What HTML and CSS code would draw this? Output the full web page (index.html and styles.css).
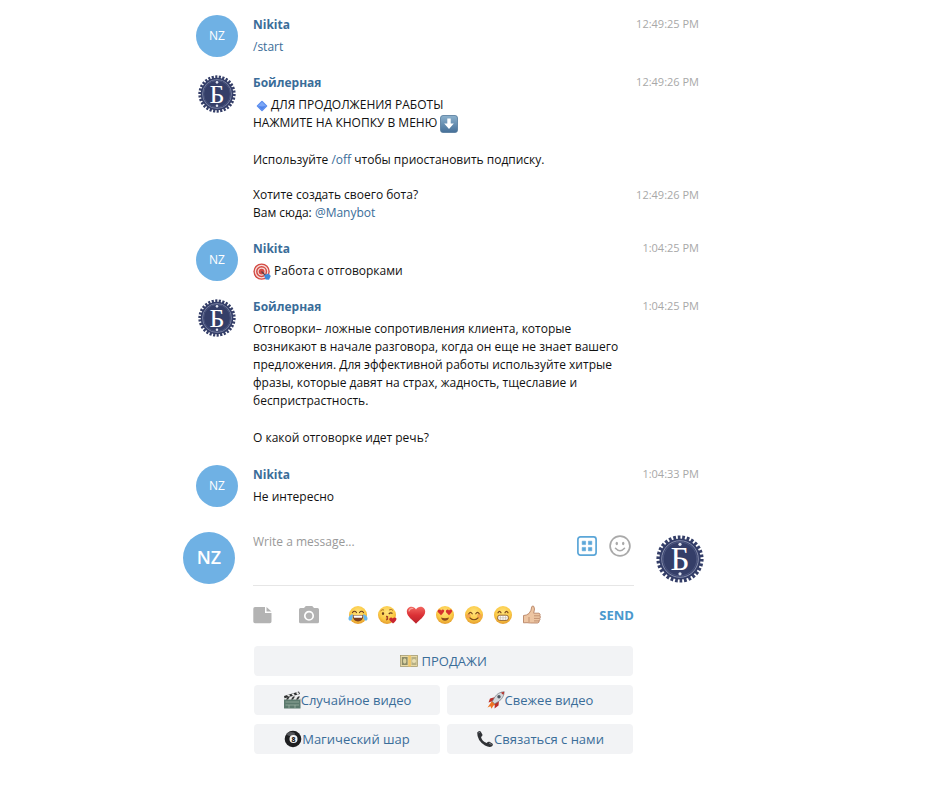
FILE: index.html
```html
<!DOCTYPE html>
<html lang="ru">
<head>
    <meta charset="UTF-8">
    <meta name="viewport" content="width=device-width, initial-scale=1.0">
    <title>Бойлерная</title>
    <link rel="stylesheet" href="styles.css">
</head>
<body>
    <!-- Shared icons -->
    <svg class="sprite" aria-hidden="true">
        <defs>
            <radialGradient id="face" cx="50%" cy="35%" r="65%">
                <stop offset="0" stop-color="#ffe37c"/>
                <stop offset="0.65" stop-color="#fbc944"/>
                <stop offset="1" stop-color="#e39a2d"/>
            </radialGradient>
            <linearGradient id="heart" x1="0" y1="0" x2="0" y2="1">
                <stop offset="0" stop-color="#f2665f"/>
                <stop offset="0.5" stop-color="#db3035"/>
                <stop offset="1" stop-color="#b8222b"/>
            </linearGradient>
            <linearGradient id="blue-key" x1="0" y1="0" x2="0" y2="1">
                <stop offset="0" stop-color="#8db2cd"/>
                <stop offset="1" stop-color="#456f98"/>
            </linearGradient>
        </defs>
        <symbol id="seal" viewBox="0 0 48 48">
            <circle cx="24" cy="24" r="21.4" fill="none" stroke="#343e68" stroke-width="4.4" pathLength="60" stroke-dasharray="1.2 0.8"/>
            <circle cx="24" cy="24" r="20.6" fill="#343e68"/>
            <circle cx="24" cy="24" r="18.3" fill="none" stroke="#9aa2be" stroke-width="0.8"/>
            <circle cx="24" cy="24" r="16.8" fill="none" stroke="#656f96" stroke-width="0.5"/>
            <circle cx="24" cy="9.3" r="1.6" fill="#dfe3ee"/>
            <circle cx="24" cy="38.8" r="1.6" fill="#dfe3ee"/>
        </symbol>
        <symbol id="diamond" viewBox="0 0 18 18">
            <path d="M9 4.5 L13.5 9 L9 13.5 L4.5 9 Z" fill="#4f83ea" stroke="#5d8fee" stroke-width="1.6" stroke-linejoin="round"/>
            <path d="M9 5 L13 9 L9 9.5 L5 9 Z" fill="#7ba6f6"/>
        </symbol>
        <symbol id="arrow-down" viewBox="0 0 18 18">
            <rect x="0.5" y="0.5" width="17" height="17" rx="2.5" fill="url(#blue-key)" stroke="#53789a" stroke-width="0.8"/>
            <path d="M7.3 3.5 H10.7 V8.5 H13.8 L9 14 L4.2 8.5 H7.3 Z" fill="#fff"/>
        </symbol>
        <symbol id="target" viewBox="0 0 18 18">
            <circle cx="8.6" cy="8.6" r="8.2" fill="#d44a43"/>
            <circle cx="8.6" cy="8.6" r="6.2" fill="none" stroke="#f6dedb" stroke-width="1.3"/>
            <circle cx="8.6" cy="8.6" r="3.5" fill="none" stroke="#f6dedb" stroke-width="1.2"/>
            <path d="M8.5 8.5 L13 13" stroke="#5d3c43" stroke-width="1.2"/>
            <path d="M11 12 L15.5 10.5 L17.8 13 L16 16.8 L12.5 16.5 Z" fill="#3f8ad8"/>
        </symbol>
        <symbol id="joy" viewBox="0 0 20 20">
            <circle cx="10" cy="10" r="9" fill="url(#face)"/>
            <path d="M4.5 7.5 Q6.5 5 8.5 7.5 M11.5 7.5 Q13.5 5 15.5 7.5" fill="none" stroke="#6c3d1c" stroke-width="1.2" stroke-linecap="round"/>
            <path d="M4.5 10 H15.5 Q15 16.5 10 16.5 Q5 16.5 4.5 10 Z" fill="#7b3e1d"/>
            <path d="M5.5 10.5 H14.5 L14 12.8 H6 Z" fill="#fff"/>
            <path d="M4.8 9 Q0 11 0.5 14.2 Q1.5 17 4 14.5 Q5 12.5 4.8 9 Z M15.2 9 Q20 11 19.5 14.2 Q18.5 17 16 14.5 Q15 12.5 15.2 9 Z" fill="#69b8ec"/>
        </symbol>
        <symbol id="kiss" viewBox="0 0 20 20">
            <circle cx="10" cy="10" r="9" fill="url(#face)"/>
            <path d="M3.5 6 Q5 4 7 5 M12 5 Q14.5 3.5 16 5.5" fill="none" stroke="#a86d27" stroke-width="0.9"/>
            <ellipse cx="6" cy="8.5" rx="1.1" ry="1.5" fill="#6c3d1c"/>
            <path d="M11.8 9 Q13.5 7 15.5 8.5" fill="none" stroke="#6c3d1c" stroke-width="1.2"/>
            <path d="M9 11.3 Q12 11.5 9.8 13 Q12 14 9 15" fill="none" stroke="#a23c25" stroke-width="1.2"/>
            <path d="M16 18.5 L12.3 15 Q11.8 12.2 14.4 12.4 L15.8 13.6 Q17.2 11.6 19.2 13 Q20.3 15 16 18.5 Z" fill="#c9252e"/>
        </symbol>
        <symbol id="love" viewBox="0 0 20 20">
            <path d="M10 18.8 C7.5 15.5 0.8 11.8 0.8 6.5 C0.8 1.5 7.5 0 10 4.5 C12.5 0 19.2 1.5 19.2 6.5 C19.2 11.8 12.5 15.5 10 18.8 Z" fill="url(#heart)"/>
            <path d="M3 6 Q4 3 6.8 3.5" fill="none" stroke="#f7a39c" stroke-width="1.2" stroke-linecap="round"/>
        </symbol>
        <symbol id="heart-eyes" viewBox="0 0 20 20">
            <circle cx="10" cy="10" r="9" fill="url(#face)"/>
            <path d="M6 10.2 L2.6 6.8 Q2.5 4 5.2 4.5 L6.2 5.5 Q8 3.5 9.2 5.6 Q9.3 7.5 6 10.2 Z M14 10.2 L10.8 7 Q10.5 4.3 13 4.5 L14 5.5 Q15.8 3.5 17.2 5.6 Q17.3 7.5 14 10.2 Z" fill="#d6322f"/>
            <path d="M6 12.5 Q10 14 14 12.5 Q13 15.8 10 15.8 Q7 15.8 6 12.5 Z" fill="#8b4a1d"/>
        </symbol>
        <symbol id="blush" viewBox="0 0 20 20">
            <circle cx="10" cy="10" r="9" fill="url(#face)"/>
            <circle cx="4.5" cy="11" r="2.3" fill="#f19450" opacity="0.7"/>
            <circle cx="15.5" cy="11" r="2.3" fill="#f19450" opacity="0.7"/>
            <path d="M4.8 8.8 Q6.5 6 8.2 8.8 M11.8 8.8 Q13.5 6 15.2 8.8 M6 13 Q10 16.5 14 13" fill="none" stroke="#7c481c" stroke-width="1.2" stroke-linecap="round"/>
        </symbol>
        <symbol id="grin" viewBox="0 0 20 20">
            <circle cx="10" cy="10" r="9" fill="url(#face)"/>
            <path d="M5 7.8 Q6.5 5 8 7.8 M12 7.8 Q13.5 5 15 7.8" fill="none" stroke="#7c481c" stroke-width="1.2" stroke-linecap="round"/>
            <rect x="4.5" y="10.2" width="11" height="5.2" rx="2.4" fill="#fff" stroke="#8b5a26" stroke-width="0.9"/>
            <path d="M5 12.8 H15 M7.4 10.5 V15 M10 10.5 V15 M12.6 10.5 V15" stroke="#b5a58c" stroke-width="0.5"/>
        </symbol>
        <symbol id="thumb" viewBox="0 0 20 20">
            <path d="M1.5 10.5 Q4.5 10.5 7 8.5 Q9.5 5.5 9.7 2 Q10.2 0.3 11.7 1.3 Q13.3 3.2 11.7 8.2 H17 Q18.8 9 17.9 10.8 Q19 12 17.8 13.4 Q18.5 14.8 17.2 15.8 Q17.5 17.5 15.5 18 H8.5 Q5 17.5 1.5 17.8 Z" fill="#edc5a2" stroke="#b88566" stroke-width="0.9"/>
            <path d="M12 10.8 H17.6 M12 13.4 H17.5 M12 15.9 H17 M7 17 V12" stroke="#b88566" stroke-width="0.8"/>
        </symbol>
        <symbol id="money" viewBox="0 0 18 18">
            <rect x="0.5" y="3.5" width="17" height="11" fill="#e9d9a4" stroke="#9b9164" stroke-width="0.7"/>
            <rect x="1.8" y="5" width="5.8" height="8" fill="#8c8b68"/>
            <ellipse cx="4.7" cy="9" rx="1.7" ry="2.7" fill="#d8d1a2"/>
            <rect x="8.3" y="3.5" width="2.6" height="11" fill="#eec66c"/>
            <rect x="11.5" y="5" width="5" height="8" fill="#b7b084"/>
            <circle cx="14" cy="9" r="2" fill="#e9dfb5"/>
        </symbol>
        <symbol id="clapper" viewBox="0 0 18 18">
            <rect x="1" y="7.5" width="16.5" height="10" rx="0.6" fill="#5c7a6e"/>
            <rect x="1" y="5.5" width="16.5" height="3" fill="#e8e8e8"/>
            <path d="M1 5 L16 0.5 L17 3 L1.5 7.3 Z" fill="#2f3131"/>
            <path d="M4 4.2 L6 3.6 L7.5 5.6 L5.5 6.1 Z M8.5 2.9 L10.5 2.3 L12 4.4 L10 4.9 Z M13 1.5 L15 1 L16.2 3.1 L14.2 3.7 Z" fill="#eee"/>
            <path d="M3 8.5 L5 5.5 H7 L5 8.5 Z M8 8.5 L10 5.5 H12 L10 8.5 Z M13 8.5 L15 5.5 H17 L15 8.5 Z" fill="#2f3131"/>
            <path d="M2.5 11 H16 M2.5 14 H16 M6 14 V17 M12 14 V17" stroke="#a2b7ab" stroke-width="0.7"/>
        </symbol>
        <symbol id="rocket" viewBox="0 0 18 18">
            <path d="M5 10 L0.5 16.5 L3.5 15.2 L4.5 17.8 L6.5 14.5 L10 13.5 Z" fill="#ee7424"/>
            <path d="M8.5 6 L3 7.5 L1.5 11.5 L6 10 Z M12 9.5 L11.5 14.5 L7.5 17.5 L8 12 Z" fill="#bb2f2b"/>
            <path d="M17.2 0.7 Q11 1 7.5 6.5 L5.3 10.5 L7.7 12.8 L11.5 10.5 Q17 7 17.2 0.7 Z" fill="#d5d8dc" stroke="#777b83" stroke-width="0.7"/>
            <circle cx="12" cy="5.8" r="1.7" fill="#4c555f"/>
            <path d="M17.2 0.7 L14 1.4 Q14.8 3.3 16.7 3.7 Z" fill="#b73b34"/>
        </symbol>
        <symbol id="phone" viewBox="0 0 18 18">
            <path d="M1.2 2.5 Q3 0 4.7 1.5 L6.5 4.7 Q6.6 6.3 5 7 Q6 11.3 10.7 13 Q12 11.3 13.5 11.8 L16.6 13.8 Q17.5 15 16 16.3 Q13.5 18 9 15.5 Q1 10.5 1.2 2.5 Z" fill="#303236"/>
            <path d="M2.5 2.8 Q3.3 2 4 2.7 M13 13 L15.5 14.5" fill="none" stroke="#8d9096" stroke-width="0.9"/>
        </symbol>
    </svg>

    <main class="chat">
        <section class="history">
            <article class="message">
                <div class="avatar">NZ</div>
                <div class="body">
                    <a href="#" class="author">Nikita</a>
                    <p><a href="#">/start</a></p>
                </div>
                <time>12:49:25 PM</time>
            </article>

            <article class="message">
                <svg class="logo" viewBox="0 0 48 48"><use href="#seal"/><text x="24" y="35" text-anchor="middle">Б</text></svg>
                <div class="body">
                    <a href="#" class="author">Бойлерная</a>
                    <p><svg class="emoji"><use href="#diamond"/></svg>ДЛЯ ПРОДОЛЖЕНИЯ РАБОТЫ<br>
                    НАЖМИТЕ НА КНОПКУ В МЕНЮ <svg class="emoji"><use href="#arrow-down"/></svg></p>
                    <p>Используйте <a href="#">/off</a> чтобы приостановить подписку.</p>
                </div>
                <time>12:49:26 PM</time>
            </article>

            <article class="message">
                <div class="body">
                    <p>Хотите создать своего бота?<br>
                    Вам сюда: <a href="#">@Manybot</a></p>
                </div>
                <time>12:49:26 PM</time>
            </article>

            <article class="message">
                <div class="avatar">NZ</div>
                <div class="body">
                    <a href="#" class="author">Nikita</a>
                    <p><svg class="emoji"><use href="#target"/></svg> Работа с отговорками</p>
                </div>
                <time>1:04:25 PM</time>
            </article>

            <article class="message">
                <svg class="logo" viewBox="0 0 48 48"><use href="#seal"/><text x="24" y="35" text-anchor="middle">Б</text></svg>
                <div class="body">
                    <a href="#" class="author">Бойлерная</a>
                    <p>Отговорки– ложные сопротивления клиента, которые<br>
                    возникают в начале разговора, когда он еще не знает вашего<br>
                    предложения. Для эффективной работы используйте хитрые<br>
                    фразы, которые давят на страх, жадность, тщеславие и<br>
                    беспристрастность.</p>
                    <p>О какой отговорке идет речь?</p>
                </div>
                <time>1:04:25 PM</time>
            </article>

            <article class="message">
                <div class="avatar">NZ</div>
                <div class="body">
                    <a href="#" class="author">Nikita</a>
                    <p>Не интересно</p>
                </div>
                <time>1:04:33 PM</time>
            </article>
        </section>

        <form class="composer">
            <div class="avatar avatar-large">NZ</div>
            <div class="panel">
                <div class="field">
                    <textarea placeholder="Write a message..." aria-label="Write a message"></textarea>
                    <button type="button" class="icon-button" aria-label="Keyboard">
                        <svg width="22" height="22" viewBox="0 0 22 22">
                            <rect x="1.9" y="1.9" width="18.2" height="18.2" rx="2.5" fill="none" stroke="#5ba6d8" stroke-width="1.7"/>
                            <path d="M6.2 6.2 H9.6 V9.6 H6.2 Z M12.4 6.2 H15.8 V9.6 H12.4 Z M6.2 12.4 H9.6 V15.8 H6.2 Z M12.4 12.4 H15.8 V15.8 H12.4 Z" fill="#5ba6d8" stroke="#5ba6d8" stroke-width="0.6" stroke-linejoin="round"/>
                        </svg>
                    </button>
                    <button type="button" class="icon-button" aria-label="Emoji">
                        <svg width="22" height="22" viewBox="0 0 22 22">
                            <circle cx="11" cy="11" r="9.9" fill="none" stroke="#a9a9a9" stroke-width="1.7"/>
                            <ellipse cx="7.8" cy="8.5" rx="1.2" ry="1.7" fill="#a9a9a9"/>
                            <ellipse cx="14.2" cy="8.5" rx="1.2" ry="1.7" fill="#a9a9a9"/>
                            <path d="M6.5 13.3 Q11 18.2 15.5 13.3" fill="none" stroke="#a9a9a9" stroke-width="1.6" stroke-linecap="round"/>
                        </svg>
                    </button>
                </div>

                <div class="toolbar">
                    <button type="button" class="icon-button" aria-label="File">
                        <svg width="20" height="20" viewBox="0 0 20 20">
                            <path d="M2 2 H12 V8 H18.5 V16.5 Q18.5 18.2 16.8 18.2 H2 Q0.3 18.2 0.3 16.5 V3.7 Q0.3 2 2 2 Z M13.5 2 L18.5 6.6 H13.5 Z" fill="#b3b3b3"/>
                        </svg>
                    </button>
                    <button type="button" class="icon-button" aria-label="Photo">
                        <svg width="22" height="20" viewBox="0 0 22 20">
                            <path d="M2.5 3 H6 L7.8 1 H14.2 L16 3 H19.5 Q21 3 21 4.5 V16.8 Q21 18.3 19.5 18.3 H2.5 Q1 18.3 1 16.8 V4.5 Q1 3 2.5 3 Z" fill="#b3b3b3"/>
                            <circle cx="11" cy="10.8" r="4.2" fill="none" stroke="#fff" stroke-width="1.7"/>
                        </svg>
                    </button>
                    <div class="reactions">
                        <button type="button" aria-label="Joy"><svg><use href="#joy"/></svg></button>
                        <button type="button" aria-label="Kiss"><svg><use href="#kiss"/></svg></button>
                        <button type="button" aria-label="Heart"><svg><use href="#love"/></svg></button>
                        <button type="button" aria-label="Heart eyes"><svg><use href="#heart-eyes"/></svg></button>
                        <button type="button" aria-label="Smile"><svg><use href="#blush"/></svg></button>
                        <button type="button" aria-label="Grin"><svg><use href="#grin"/></svg></button>
                        <button type="button" aria-label="Thumbs up"><svg><use href="#thumb"/></svg></button>
                    </div>
                    <button type="submit" class="send">SEND</button>
                </div>

                <div class="bot-keyboard">
                    <button type="button" class="wide"><svg class="emoji"><use href="#money"/></svg>&nbsp;ПРОДАЖИ</button>
                    <button type="button"><svg class="emoji"><use href="#clapper"/></svg>Случайное видео</button>
                    <button type="button"><svg class="emoji"><use href="#rocket"/></svg>Свежее видео</button>
                    <button type="button">
                        <svg class="emoji" viewBox="0 0 18 18">
                            <circle cx="9" cy="9" r="8.3" fill="#1e1e20"/>
                            <ellipse cx="7" cy="4" rx="4" ry="2" fill="#55565a"/>
                            <circle cx="9.5" cy="9" r="4" fill="#f5f5f5"/>
                            <text x="9.5" y="11.5" text-anchor="middle" class="ball-number">8</text>
                        </svg>Магический шар
                    </button>
                    <button type="button"><svg class="emoji"><use href="#phone"/></svg>Связаться с нами</button>
                </div>
            </div>
            <svg class="logo logo-large" viewBox="0 0 48 48"><use href="#seal"/><text x="24" y="35" text-anchor="middle">Б</text></svg>
        </form>
    </main>
</body>
</html>
```
FILE: styles.css
```css
* {
    box-sizing: border-box;
}

body {
    margin: 0;
    background: #fff;
    color: #111;
    font-family: "Open Sans", "Noto Sans", sans-serif;
    font-size: 12px;
    line-height: 18px;
}

a {
    color: #3a6d99;
    text-decoration: none;
}

button {
    padding: 0;
    border: none;
    background: none;
    font-family: inherit;
    cursor: pointer;
}

.sprite {
    position: absolute;
    width: 0;
    height: 0;
}

.ball-number {
    font-size: 7px;
    font-weight: bold;
}

/* Chat column */
.chat {
    max-width: 704px;
    padding: 15px 0 40px 183px;
}

.history {
    padding: 0 5px 0 13px;
}

.message {
    display: grid;
    grid-template-columns: 42px 1fr auto;
    column-gap: 15px;
    margin-bottom: 17px;
}

.message .body {
    grid-column: 2;
}

.message:has(+ .message > .body:first-child) {
    margin-bottom: 16px;
}

.message p {
    margin: 0;
}

.message p + p {
    margin-top: 19px;
}

.message p + p:last-child {
    margin-bottom: 1px;
}

.author {
    display: block;
    margin-bottom: 3px;
    line-height: 20px;
    font-weight: bold;
}

.message time {
    color: #a8a8a8;
    font-size: 11px;
    line-height: 18px;
}

.avatar {
    display: flex;
    align-items: center;
    justify-content: center;
    width: 42px;
    height: 42px;
    margin-bottom: -1px;
    border-radius: 50%;
    background: #6fb1e4;
    color: #fff;
}

.avatar-large {
    width: 52px;
    height: 52px;
    padding-bottom: 2px;
    font-size: 18px;
    font-weight: 600;
}

.logo {
    width: 38px;
    height: 38px;
    margin: 2px 2px 0;
}

.logo text {
    font-family: "Liberation Serif", serif;
    font-size: 33px;
    fill: #fff;
}

.logo-large {
    width: 48px;
    height: 48px;
    margin: 3px 0 0 4px;
}

.emoji {
    width: 18px;
    height: 18px;
    margin: -2px 0;
    vertical-align: -4px;
}

/* Message form */
.composer {
    display: grid;
    grid-template-columns: 52px 1fr 52px;
    column-gap: 18px;
    margin-top: 26px;
}

.field {
    display: flex;
    gap: 11px;
    height: 54px;
    padding-right: 3px;
    border-bottom: 1px solid #e6e6e6;
}

.field textarea {
    flex: 1;
    min-width: 0;
    padding: 0;
    border: none;
    outline: none;
    resize: none;
    font: inherit;
    line-height: 20px;
}

.field textarea::placeholder {
    color: #999;
}

.icon-button {
    display: flex;
}

.field .icon-button {
    margin-top: 3px;
    height: 22px;
}

.toolbar {
    display: flex;
    align-items: center;
    gap: 25px;
    height: 58px;
}

.reactions {
    display: flex;
    flex: 1;
    gap: 9px;
    padding-left: 3px;
}

.reactions button {
    display: flex;
}

.reactions svg {
    width: 20px;
    height: 20px;
}

.send {
    color: #4a98cd;
    font-size: 13px;
    font-weight: bold;
}

.bot-keyboard {
    display: grid;
    grid-template-columns: 1fr 1fr;
    gap: 9px 7px;
    padding: 2px 1px;
}

.bot-keyboard button {
    display: flex;
    align-items: center;
    justify-content: center;
    height: 30px;
    border-radius: 4px;
    background: #f2f3f5;
    color: #3a6d99;
    font-size: 13px;
}

.bot-keyboard .wide {
    grid-column: 1 / -1;
}
```
